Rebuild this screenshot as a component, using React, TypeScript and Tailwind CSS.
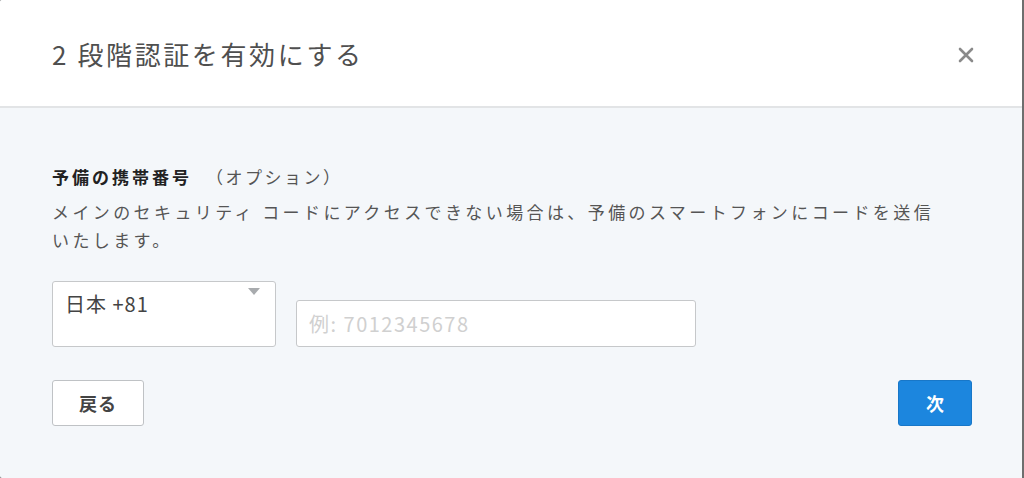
import React from "react";

const F = { fontFamily: '"Noto Sans CJK JP", "Noto Sans", sans-serif' };

export default function App() {
  return (
    <div className="w-[1024px] h-[478px] bg-[#6e6e6e] overflow-hidden" style={F}>
      <div className="w-[1022px] h-[478px] rounded-l-[2px] overflow-hidden flex flex-col bg-[#f4f7fa]">
        <div className="h-[108px] bg-white border-b-2 border-[#e2e4e6] flex items-center justify-between pl-[52px] pr-[47px] shrink-0">
          <h1 className="text-[26px] leading-none text-[#4f4f4f] tracking-[2.6px] pt-[1px]">2 段階認証を有効にする</h1>
          <svg width="18" height="18" viewBox="0 0 18 18" className="mt-[4px]">
            <path d="M3 3 L15 15 M15 3 L3 15" stroke="#8a8a8a" strokeWidth="2.6" strokeLinecap="round" />
          </svg>
        </div>
        <div className="flex-1 px-[52px] pt-[55px]">
          <div className="text-[17px] leading-[28px] tracking-[3px]">
            <span className="font-bold text-[#222]">予備の携帯番号</span>
            <span className="text-[#555] tracking-[2.5px] ml-[14px]">（オプション）</span>
          </div>
          <p className="mt-[7px] text-[17px] leading-[28px] tracking-[3.4px] text-[#555] w-[920px]">
            メインのセキュリティ コードにアクセスできない場合は、予備のスマートフォンにコードを送信
            <br />
            いたします。
          </p>
          <div className="mt-[27px] flex items-end gap-[20px]">
            <div className="relative w-[224px] h-[66px] bg-white border border-[#c6c8ca] rounded-[3px] pl-[12px] pt-[8px] text-[20px] leading-[28px] text-[#444] tracking-[1px]">
              日本 +81
              <svg width="12" height="7" viewBox="0 0 12 7" className="absolute right-[15px] top-[6px]">
                <path d="M0 0 L12 0 L6 7 Z" fill="#a8abae" />
              </svg>
            </div>
            <div className="w-[400px] h-[47px] bg-white border border-[#c6c8ca] rounded-[3px] pl-[12px] flex items-center text-[20px] text-[#d0d0d0] tracking-[1.5px]">
              例: 7012345678
            </div>
          </div>
          <div className="mt-[33px] flex items-center justify-between">
            <button className="w-[92px] h-[46px] bg-white border border-[#bfc2c5] rounded-[3px] text-[18px] font-bold text-[#444] tracking-[1px]">
              戻る
            </button>
            <button className="w-[74px] h-[46px] bg-[#1c86de] border border-[#1877c8] rounded-[3px] text-[18px] font-bold text-white mr-[-2px]">
              次
            </button>
          </div>
        </div>
      </div>
    </div>
  );
}
